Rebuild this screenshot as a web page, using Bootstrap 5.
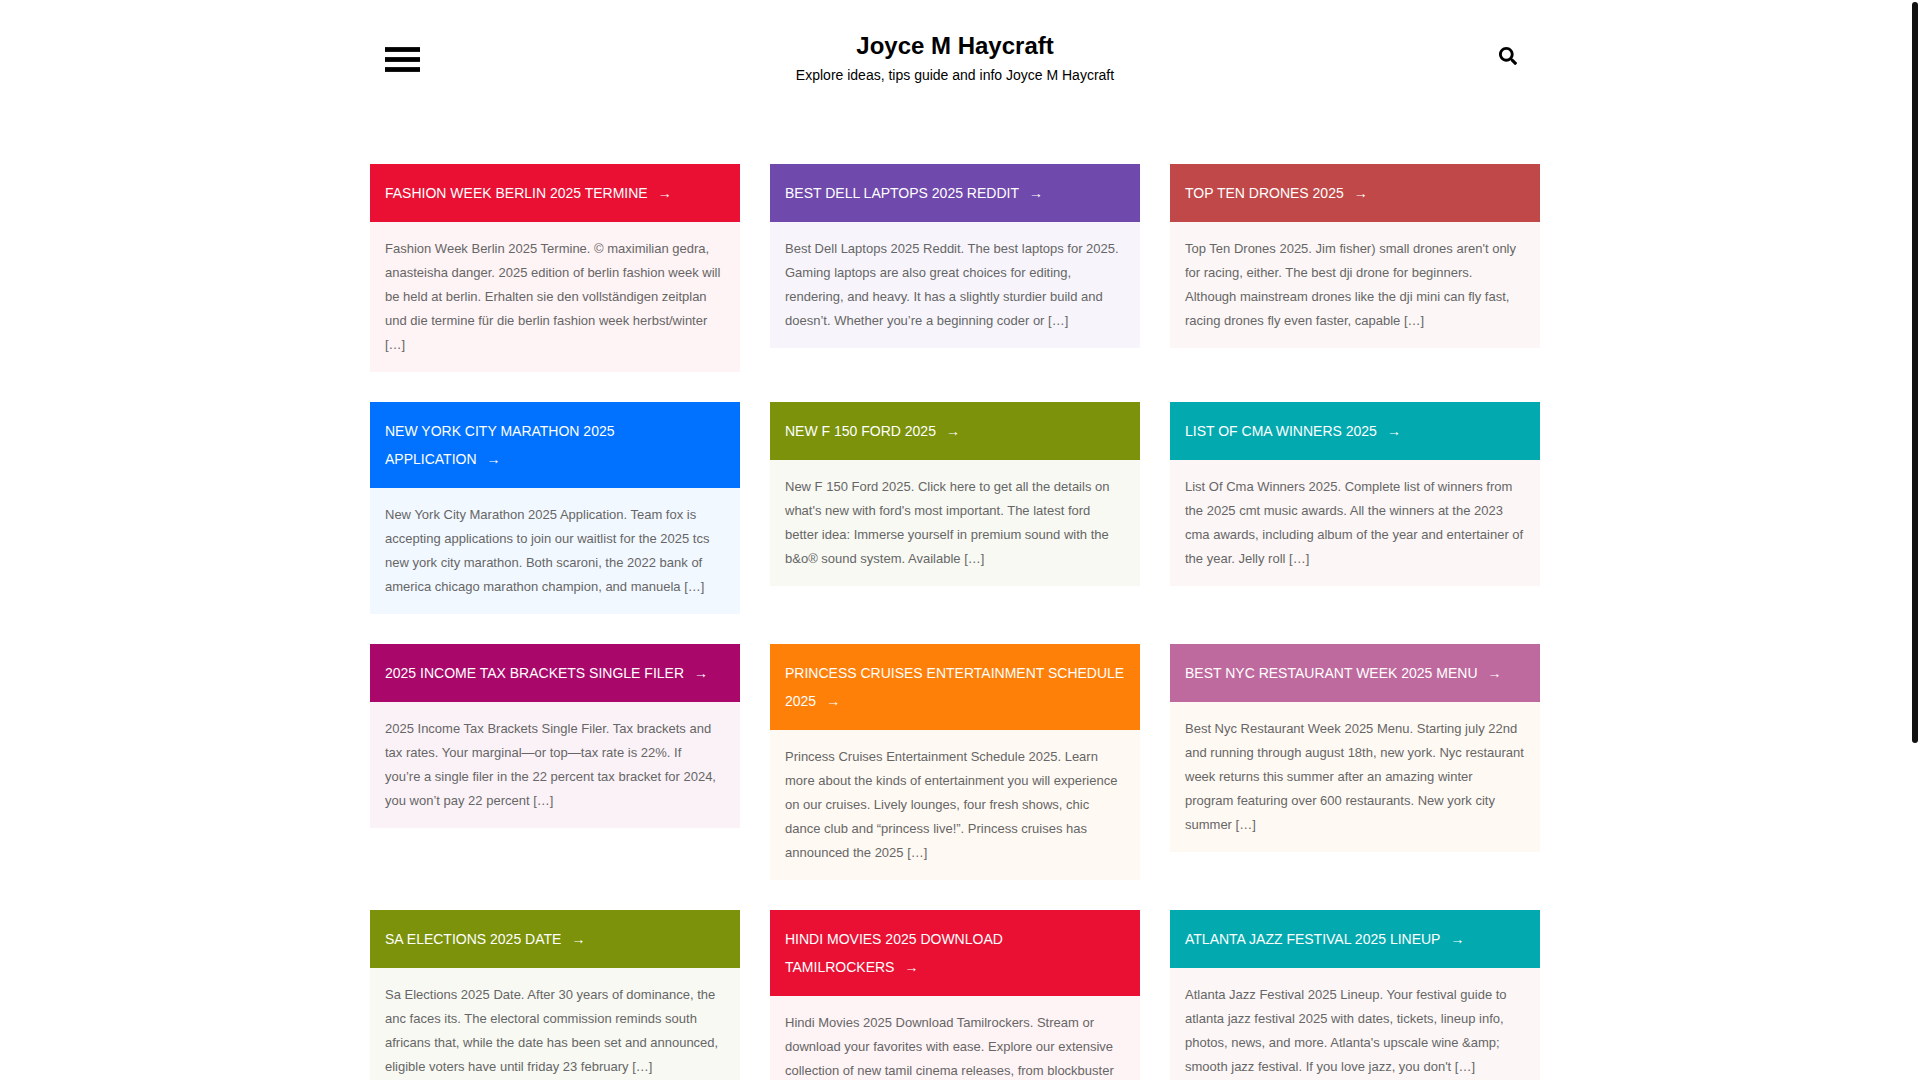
<!DOCTYPE html>
<html lang="en">
<head>
<meta charset="utf-8">
<meta name="viewport" content="width=device-width, initial-scale=1">
<title>Joyce M Haycraft</title>
<link href="https://cdn.jsdelivr.net/npm/bootstrap@5.3.0/dist/css/bootstrap.min.css" rel="stylesheet">
<style>
html { scrollbar-width: none; }
html::-webkit-scrollbar { display: none; }
body { font-family: Arial, "Liberation Sans", sans-serif; font-size: 13px; line-height: 24px; color: #666; padding-right: 10px; }
.page-wrap { max-width: 1200px; padding: 0 15px; }
.site-head { padding: 30px 15px 76px; color: #000; }
.head-side { flex: 1 1 0; }
.menu-toggle { width: 35px; padding: 17px 0 0; }
.menu-toggle span { display: block; height: 5px; background: #000; border-top: 1px solid #1a1a1a; border-bottom: 1px solid #1a1a1a; }
.menu-toggle span + span { margin-top: 5px; }
.search-toggle { padding: 17px 8px 0; }
.search-toggle svg { display: block; width: 18px; height: 18px; }
.site-title { font-size: 24px; line-height: 32px; font-weight: 700; margin: 0; }
.site-title a { color: #000; text-decoration: none; }
.site-tagline { font-size: 14px; line-height: 26px; margin: 0; }
.post-grid { --bs-gutter-x: 30px; --bs-gutter-y: 30px; }
.post-title { font-size: 14px; line-height: 28px; font-weight: 400; text-transform: uppercase; margin: 0; padding: 15px; background: var(--tone); }
.post-title a { color: #fff; text-decoration: none; }
.post-title a::after { content: "→"; margin-left: 10px; }
.post-text { margin: 0; padding: 15px; background: var(--tint); }
.red { --tone: #e91034; --tint: #fef3f5; }
.violet { --tone: #6f49ab; --tint: #f7f5fb; }
.brick { --tone: #c04848; --tint: #fcf6f6; }
.azure { --tone: #0072ff; --tint: #f2f8ff; }
.olive { --tone: #7b920a; --tint: #f8f9f3; }
.teal { --tone: #02aab0; --tint: #fcf6f6; }
.plum { --tone: #aa076b; --tint: #fbf2f8; }
.orange { --tone: #ff8008; --tint: #fff9f3; }
.mauve { --tone: #bf6a9e; --tint: #fff9f3; }
.scroll-rail { padding: 2px 2px 0; }
.scroll-thumb { width: 6px; height: 741px; background: #111; border-radius: 5px; }
</style>
<script src="https://cdn.jsdelivr.net/npm/bootstrap@5.3.0/dist/js/bootstrap.bundle.min.js" defer></script>
</head>
<body>
<div class="page-wrap mx-auto">
  <header class="site-head d-flex align-items-start">
    <div class="head-side d-flex">
      <button type="button" class="menu-toggle border-0 bg-transparent" aria-label="Menu"><span></span><span></span><span></span></button>
    </div>
    <div class="text-center">
      <h1 class="site-title"><a href="#">Joyce M Haycraft</a></h1>
      <p class="site-tagline">Explore ideas, tips guide and info Joyce M Haycraft</p>
    </div>
    <div class="head-side d-flex justify-content-end">
      <button type="button" class="search-toggle border-0 bg-transparent" aria-label="Search"><svg viewBox="0 0 512 512" aria-hidden="true"><path d="M505 442.700L405.300 343c-4.500-4.500-10.600-7-17-7H372c27.600-35.300 44-79.700 44-128C416 93.100 322.900 0 208 0S0 93.100 0 208s93.100 208 208 208c48.300 0 92.700-16.400 128-44v16.300c0 6.400 2.500 12.500 7 17l99.700 99.700c9.400 9.400 24.600 9.400 33.900 0l28.300-28.300c9.400-9.400 9.400-24.600.1-34zM208 336c-70.700 0-128-57.200-128-128 0-70.700 57.200-128 128-128 70.700 0 128 57.200 128 128 0 70.700-57.200 128-128 128z"/></svg></button>
    </div>
  </header>
  <main class="row row-cols-1 row-cols-md-3 post-grid">
    <div><article class="red"><h2 class="post-title"><a href="#">Fashion Week Berlin 2025 Termine</a></h2><p class="post-text">Fashion Week Berlin 2025 Termine. © maximilian gedra, anasteisha danger. 2025 edition of berlin fashion week will be held at berlin. Erhalten sie den vollständigen zeitplan und die termine für die berlin fashion week herbst/winter […]</p></article></div>
    <div><article class="violet"><h2 class="post-title"><a href="#">Best Dell Laptops 2025 Reddit</a></h2><p class="post-text">Best Dell Laptops 2025 Reddit. The best laptops for 2025. Gaming laptops are also great choices for editing, rendering, and heavy. It has a slightly sturdier build and doesn’t. Whether you’re a beginning coder or […]</p></article></div>
    <div><article class="brick"><h2 class="post-title"><a href="#">Top Ten Drones 2025</a></h2><p class="post-text">Top Ten Drones 2025. Jim fisher) small drones aren't only for racing, either. The best dji drone for beginners. Although mainstream drones like the dji mini can fly fast, racing drones fly even faster, capable […]</p></article></div>
    <div><article class="azure"><h2 class="post-title"><a href="#">New York City Marathon 2025 Application</a></h2><p class="post-text">New York City Marathon 2025 Application. Team fox is accepting applications to join our waitlist for the 2025 tcs new york city marathon. Both scaroni, the 2022 bank of america chicago marathon champion, and manuela […]</p></article></div>
    <div><article class="olive"><h2 class="post-title"><a href="#">New F 150 Ford 2025</a></h2><p class="post-text">New F 150 Ford 2025. Click here to get all the details on what's new with ford's most important. The latest ford better idea: Immerse yourself in premium sound with the b&amp;o® sound system. Available […]</p></article></div>
    <div><article class="teal"><h2 class="post-title"><a href="#">List Of Cma Winners 2025</a></h2><p class="post-text">List Of Cma Winners 2025. Complete list of winners from the 2025 cmt music awards. All the winners at the 2023 cma awards, including album of the year and entertainer of the year. Jelly roll […]</p></article></div>
    <div><article class="plum"><h2 class="post-title"><a href="#">2025 Income Tax Brackets Single Filer</a></h2><p class="post-text">2025 Income Tax Brackets Single Filer. Tax brackets and tax rates. Your marginal—or top—tax rate is 22%. If<br>you’re a single filer in the 22 percent tax bracket for 2024, you won’t pay 22 percent […]</p></article></div>
    <div><article class="orange"><h2 class="post-title"><a href="#">Princess Cruises Entertainment Schedule 2025</a></h2><p class="post-text">Princess Cruises Entertainment Schedule 2025. Learn more about the kinds of entertainment you will experience on our cruises. Lively lounges, four fresh shows, chic dance club and “princess live!”. Princess cruises has announced the 2025 […]</p></article></div>
    <div><article class="mauve"><h2 class="post-title"><a href="#">Best Nyc Restaurant Week 2025 Menu</a></h2><p class="post-text">Best Nyc Restaurant Week 2025 Menu. Starting july 22nd and running through august 18th, new york. Nyc restaurant week returns this summer after an amazing winter<br>program featuring over 600 restaurants. New york city<br>summer […]</p></article></div>
    <div><article class="olive"><h2 class="post-title"><a href="#">Sa Elections 2025 Date</a></h2><p class="post-text">Sa Elections 2025 Date. After 30 years of dominance, the anc faces its. The electoral commission reminds south africans that, while the date has been set and announced, eligible voters have until friday 23 february […]</p></article></div>
    <div><article class="red"><h2 class="post-title"><a href="#">Hindi Movies 2025 Download Tamilrockers</a></h2><p class="post-text">Hindi Movies 2025 Download Tamilrockers. Stream or download your favorites with ease. Explore our extensive collection of new tamil cinema releases, from blockbuster […]</p></article></div>
    <div><article class="teal"><h2 class="post-title"><a href="#">Atlanta Jazz Festival 2025 Lineup</a></h2><p class="post-text">Atlanta Jazz Festival 2025 Lineup. Your festival guide to atlanta jazz festival 2025 with dates, tickets, lineup info, photos, news, and more. Atlanta's upscale wine &amp;amp; smooth jazz festival. If you love jazz, you don't […]</p></article></div>
  </main>
</div>
<div class="scroll-rail position-fixed top-0 end-0" aria-hidden="true"><div class="scroll-thumb"></div></div>
</body>
</html>
